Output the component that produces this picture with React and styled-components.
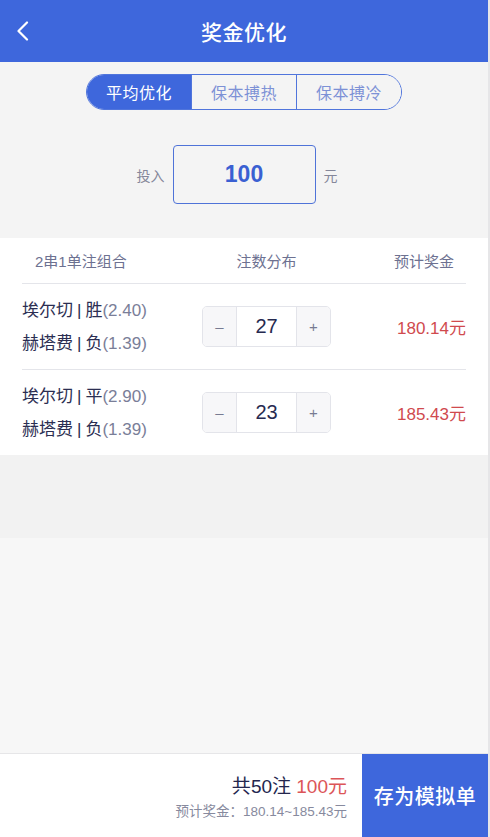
import React, { useState } from 'react';
import styled, { createGlobalStyle } from 'styled-components';

const GlobalStyle = createGlobalStyle`
  html, body {
    margin: 0;
    padding: 0;
    background: #e6e6e8;
  }

  body {
    font-family: "Liberation Sans", "Noto Sans CJK SC", sans-serif;
    -webkit-font-smoothing: antialiased;
  }

  * {
    box-sizing: border-box;
  }
`;

const Page = styled.div`
  width: 488px;
  min-height: 100vh;
  display: flex;
  flex-direction: column;
  background: #f7f7f7;
`;

const Header = styled.header`
  height: 62px;
  flex-shrink: 0;
  background: #3e67dc;
  display: grid;
  grid-template-columns: 62px 1fr 62px;
  align-items: center;

  h1 {
    margin: 0;
    text-align: center;
    color: #fff;
    font-size: 21px;
    font-weight: 500;
    letter-spacing: 0.5px;
  }
`;

const BackButton = styled.button`
  border: 0;
  background: none;
  padding: 0 0 0 16px;
  height: 62px;
  display: flex;
  align-items: center;
  cursor: pointer;
`;

const TopPanel = styled.section`
  background: #f4f4f4;
  padding: 12px 0 34px;
  display: flex;
  flex-direction: column;
  align-items: center;
`;

const Segments = styled.div`
  display: flex;
  width: 316px;
  height: 36px;
  border: 1.5px solid #5075dc;
  border-radius: 18px;
  overflow: hidden;
`;

const Segment = styled.button`
  flex: 1;
  border: 0;
  border-left: ${p => (p.$first ? '0' : '1.5px solid #5075dc')};
  background: ${p => (p.$active ? '#3e67dc' : '#f4f4f4')};
  color: ${p => (p.$active ? '#fff' : '#7d91d6')};
  font-family: inherit;
  font-size: 16px;
  letter-spacing: 0.5px;
  padding: 0;
  cursor: pointer;
`;

const StakeRow = styled.div`
  margin-top: 35px;
  width: 100%;
  display: grid;
  grid-template-columns: 1fr 143px 1fr;
  align-items: center;
  column-gap: 8px;
  font-size: 14px;
  color: #85879a;
`;

const StakeLabel = styled.span`
  justify-self: ${p => (p.$end ? 'end' : 'start')};
`;

const StakeBox = styled.div`
  height: 59px;
  border: 1.5px solid #4f73d8;
  border-radius: 4px;
  display: flex;
  align-items: center;
  justify-content: center;
  color: #3a60d2;
  font-size: 23px;
  font-weight: 700;
`;

const Table = styled.section`
  background: #fff;
  padding: 0 22px;
`;

const Grid = styled.div`
  display: grid;
  grid-template-columns: 180px 129px 1fr;
  align-items: center;
  height: ${p => p.$height}px;
  border-bottom: ${p => (p.$line ? '1px solid #e4e5ea' : '0')};
`;

const HeadCell = styled.div`
  font-size: 15px;
  color: #6d7191;
  text-align: ${p => p.$align || 'left'};
  padding: ${p => p.$pad || '0'};
`;

const Teams = styled.div`
  font-size: 17px;
  line-height: 33px;
  color: #2b2e52;
  white-space: nowrap;

  b {
    font-weight: 400;
    margin: 0 4px;
  }

  span {
    color: #7a7e98;
  }
`;

const Stepper = styled.div`
  display: grid;
  grid-template-columns: 33px 1fr 33px;
  height: 41px;
  border: 1px solid #e3e4ea;
  border-radius: 5px;
  overflow: hidden;
`;

const StepButton = styled.button`
  border: 0;
  background: #f7f7f9;
  color: #777b92;
  font-family: inherit;
  font-size: 15px;
  padding: 0;
  cursor: pointer;
`;

const StepValue = styled.div`
  background: #fff;
  border-left: 1px solid #e3e4ea;
  border-right: 1px solid #e3e4ea;
  display: flex;
  align-items: center;
  justify-content: center;
  font-size: 20px;
  color: #262a50;
`;

const Prize = styled.div`
  text-align: right;
  font-size: 17px;
  color: #d04a4e;
`;

const Band = styled.div`
  height: 83px;
  background: #f2f2f2;
`;

const Filler = styled.div`
  flex: 1;
  background: #f7f7f7;
`;

const Footer = styled.footer`
  height: 84px;
  flex-shrink: 0;
  display: flex;
  background: #fff;
  border-top: 1px solid #e6e6e8;
`;

const Summary = styled.div`
  flex: 1;
  display: flex;
  flex-direction: column;
  align-items: flex-end;
  justify-content: center;
  padding-right: 15px;
  gap: 2px;
`;

const Total = styled.div`
  font-size: 19px;
  color: #23264e;

  em {
    font-style: normal;
    color: #dc5558;
  }
`;

const Estimate = styled.div`
  font-size: 13.5px;
  color: #878a9e;
`;

const SaveButton = styled.button`
  width: 126px;
  border: 0;
  background: #3e67dc;
  color: #fff;
  font-family: inherit;
  font-size: 20px;
  font-weight: 500;
  letter-spacing: 0.5px;
  padding: 0;
  cursor: pointer;
`;

const modes = ['平均优化', '保本搏热', '保本搏冷'];

const initialRows = [
  { home: '埃尔切', pick: '胜', odds: '2.40', away: '赫塔费', pick2: '负', odds2: '1.39', count: 27, prize: '180.14' },
  { home: '埃尔切', pick: '平', odds: '2.90', away: '赫塔费', pick2: '负', odds2: '1.39', count: 23, prize: '185.43' },
];

const App = () => {
  const [mode, setMode] = useState(0);
  const [rows, setRows] = useState(initialRows);

  const step = (i, d) =>
    setRows(rows.map((r, j) => (j === i ? { ...r, count: Math.max(0, r.count + d) } : r)));

  const total = rows.reduce((s, r) => s + r.count, 0);

  return (
    <Page>
      <GlobalStyle />
      <Header>
        <BackButton aria-label='返回'>
          <svg width='13' height='20' viewBox='0 0 13 20'>
            <polyline points='11,1.5 2.5,10 11,18.5' fill='none' stroke='#fff' strokeWidth='2.2' strokeLinecap='round' strokeLinejoin='round' />
          </svg>
        </BackButton>
        <h1>奖金优化</h1>
        <div />
      </Header>

      <TopPanel>
        <Segments>
          {modes.map((m, i) => (
            <Segment key={m} $first={i === 0} $active={mode === i} onClick={() => setMode(i)}>{m}</Segment>
          ))}
        </Segments>
        <StakeRow>
          <StakeLabel $end>投入</StakeLabel>
          <StakeBox>100</StakeBox>
          <StakeLabel>元</StakeLabel>
        </StakeRow>
      </TopPanel>

      <Table>
        <Grid $height={46} $line>
          <HeadCell $pad='0 0 0 13px'>2串1单注组合</HeadCell>
          <HeadCell $align='center'>注数分布</HeadCell>
          <HeadCell $align='right' $pad='0 12px 0 0'>预计奖金</HeadCell>
        </Grid>
        {rows.map((r, i) => (
          <Grid key={i} $height={i === 0 ? 86 : 85} $line={i < rows.length - 1}>
            <Teams>
              <div>{r.home}<b>|</b>{r.pick}<span>({r.odds})</span></div>
              <div>{r.away}<b>|</b>{r.pick2}<span>({r.odds2})</span></div>
            </Teams>
            <Stepper>
              <StepButton onClick={() => step(i, -1)}>–</StepButton>
              <StepValue>{r.count}</StepValue>
              <StepButton onClick={() => step(i, 1)}>+</StepButton>
            </Stepper>
            <Prize>{r.prize}元</Prize>
          </Grid>
        ))}
      </Table>

      <Band />
      <Filler />

      <Footer>
        <Summary>
          <Total>共{total}注 <em>100元</em></Total>
          <Estimate>预计奖金：180.14~185.43元</Estimate>
        </Summary>
        <SaveButton>存为模拟单</SaveButton>
      </Footer>
    </Page>
  );
};

export default App;
